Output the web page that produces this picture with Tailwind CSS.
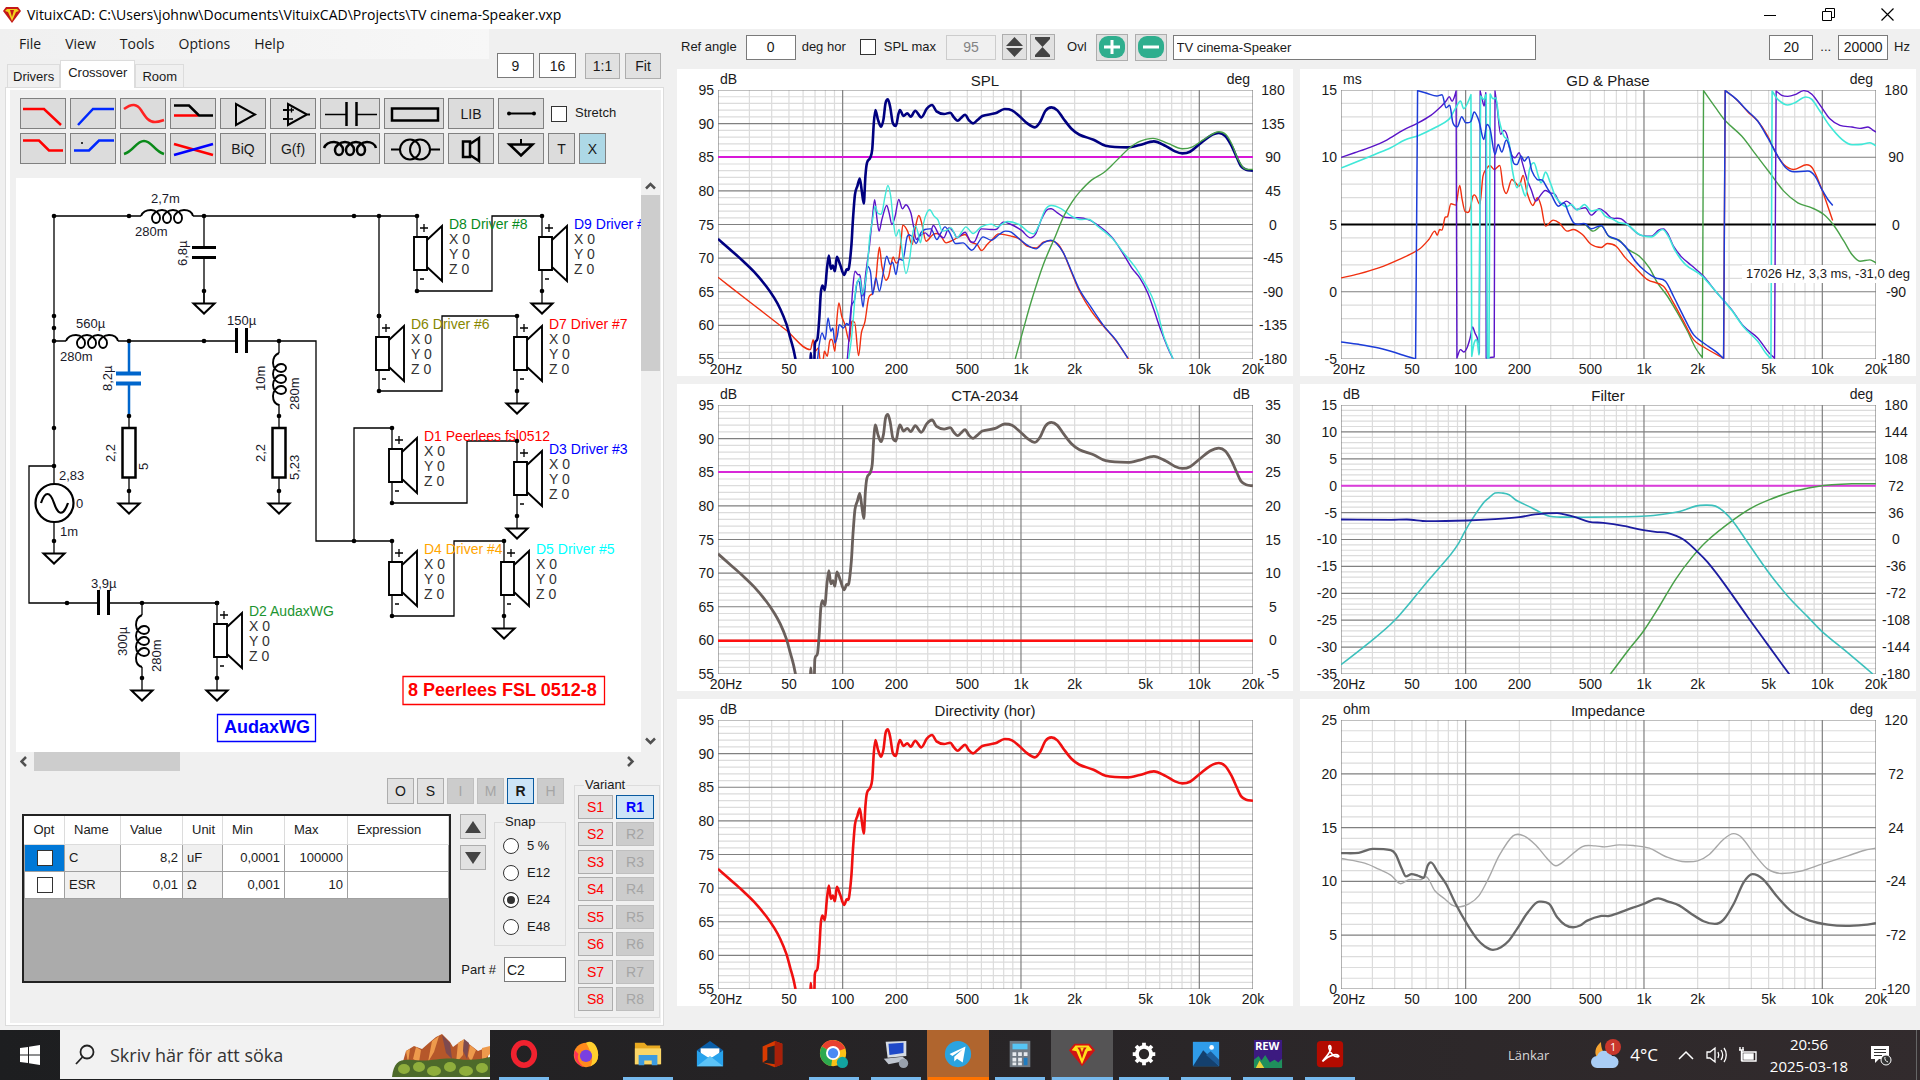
<!DOCTYPE html>
<html lang="sv">
<head>
  <meta charset="UTF-8">
  <meta name="viewport" content="width=device-width, initial-scale=1">
  <title>VituixCAD</title>
  <script src="https://cdn.jsdelivr.net/npm/@tailwindcss/browser@4"></script>
</head>
<body class="h-screen min-h-[1080px] flex flex-col bg-[#f0f0f0] text-[#1a1a1a] text-[13px] leading-4 font-['Liberation_Sans',Arial,sans-serif] overflow-hidden">

  <!-- Title bar -->
  <header class="h-[29px] shrink-0 bg-white flex items-center text-black font-['Open_Sans',sans-serif] text-sm">
    <svg class="ml-[3px] mr-[6px]" width="18" height="16" viewBox="0 0 18 16"><path d="M3 0h12l3 4-9 12L0 4z" fill="#c41818"/><path d="M4 2h10l2 2-3 1-4 9-4-9-3-1z" fill="#f2d21c"/><path d="M7 3h4l-2 7z" fill="#c41818"/></svg>
    <span>VituixCAD: C:\Users\johnw\Documents\VituixCAD\Projects\TV cinema-Speaker.vxp</span>
    <div class="ml-auto mr-[3px] flex">
      <button class="w-[58px] h-[29px] grid place-items-center" aria-label="Minimize"><svg width="12" height="12"><path d="M0 6.5h12" stroke="#000"/></svg></button>
      <button class="w-[58px] h-[29px] grid place-items-center" aria-label="Restore"><svg width="13" height="13" fill="none" stroke="#000"><path d="M.5 3.500h9v9h-9zM3.500 3V.5h9v9H10"/></svg></button>
      <button class="w-[60px] h-[29px] grid place-items-center" aria-label="Close"><svg width="13" height="13" stroke="#000" stroke-width="1.200"><path d="M.5.5l12 12M12.500.5l-12 12"/></svg></button>
    </div>
  </header>

  <main class="flex-1 flex min-h-0">

    <!-- Left side: crossover editor -->
    <section class="w-[669px] shrink-0 flex flex-col">
      <div class="flex justify-between h-[58px]">
        <div class="flex flex-col justify-between">
          <nav class="w-[489px] h-[30px] flex items-center gap-6 pl-[19px] bg-linear-to-r from-[#f0f0f0] to-[#f7f7f7] font-['Open_Sans',sans-serif] text-sm">
            <button>File</button><button>View</button><button>Tools</button><button>Options</button><button>Help</button>
          </nav>
          <div class="flex items-end pl-[7px] relative z-10 -mb-px" role="tablist">
            <button role="tab" class="h-6 px-[5px] border border-b-0 border-[#dcdcdc]">Drivers</button>
            <button role="tab" class="h-7 px-[7px] pb-1 bg-white border border-b-0 border-[#dcdcdc]">Crossover</button>
            <button role="tab" class="h-6 px-[6px] border border-b-0 border-[#dcdcdc]">Room</button>
          </div>
        </div>
        <div class="flex gap-[5px] pt-6 pr-2 text-sm">
          <input aria-label="Columns" value="9" class="w-[37px] h-[25px] bg-white border border-[#7a7a7a] text-center">
          <input aria-label="Rows" value="16" class="w-[37px] h-[25px] bg-white border border-[#7a7a7a] text-center">
          <button class="ml-[4px] w-[35px] h-[26px] bg-[#e1e1e1] border border-[#adadad]">1:1</button>
          <button class="w-[36px] h-[26px] bg-[#e1e1e1] border border-[#adadad]">Fit</button>
        </div>
      </div>

      <div class="ml-[5px] mr-[5px] mb-1 flex-1 border border-[#dcdcdc]">
        <div class="h-full border-2 border-l-4 border-white pt-2">

          <!-- Parts toolbar -->
          <div class="pl-[10px] flex flex-col gap-1" id="toolbar"></div>

          <!-- Schematic -->
          <div class="mt-[14px] pl-[6px] flex">
            <div>
              <svg id="schematic" class="bg-white" width="625" height="574" viewBox="16 178 625 574" fill="none" stroke="#000" stroke-width="1.300">
                <defs>
                  <path id="coil" d="M0 0C2 -5 6 -6 10 -6c5 0 9 4 9 8c0 3 -2 5 -4 5c-2 0 -4 -2 -4 -5c0 -4 5 -8 10 -8c5 0 9 4 9 8c0 3 -2 5 -4 5c-2 0 -4 -2 -4 -5c0 -4 5 -8 10 -8c5 0 9 4 9 8c0 3 -2 5 -4 5c-2 0 -4 -2 -4 -5c0 -4 5 -8 10 -8c4 0 8 2 9 6"/>
                  <g id="ground"><circle r="2.300" fill="#000" stroke="none"/><path d="M0 0V12"/><path d="M-10.500 12.500H10.500L0 22.500z" stroke-width="2"/></g>
                  <circle id="dot" r="2.300" fill="#000" stroke="none"/>
                  <g id="speaker"><path d="M0 0V20M0 54V75"/><path d="M-3 21H10V54H-3zM10 24L25 10V65L10 51" stroke-width="1.900"/><path d="M3 12h8M7 8v8M3 63h4" stroke-width="1.300"/></g>
                </defs>
                <g id="wires">
                  <path d="M54 216V484M54 216H141M193 216H417M204 216V247M204 258V303M54 341H66M118 341H236M247 341H316V541H392M279 341V353M279 404V427M279 478V491M129 416V427M129 478V491"/>
                  <path d="M54 466H29V603H97M109 603H217M142 603V615M142 667V678M54 522V541"/>
                  <path d="M417 291H492V216H542M379 216V316M379 391H442V316H517M354 541V428H392M392 503H467V441H517M392 616H454V541H504"/>
                </g>
                <g stroke-width="3"><path d="M192 247.500H216M192 257.500H216M236.500 328V353M246.500 328V353M98.500 590V615M108.500 590V615"/></g>
                <g stroke-width="2.500"><path d="M122.500 428H135.500V477.500H122.500zM272.500 428H285.500V477.500H272.500z"/></g>
                <g stroke="#0066cc"><path d="M129 341V373M129 383V416" stroke-width="2.500"/><path d="M116 373.500H141M116 383.500H141" stroke-width="4"/></g>
                <g stroke-width="1.900">
                  <use href="#coil" x="141" y="216"/><use href="#coil" x="66" y="341"/>
                  <use href="#coil" transform="matrix(0 1 1 0 279 353)"/><use href="#coil" transform="matrix(0 1 1 0 142 615)"/>
                </g>
                <circle cx="54.500" cy="503" r="19" stroke-width="2.200"/>
                <path d="M41 503C45 491 50 491 54 503S63 517 68 503" stroke-width="2.200"/>
                <g id="dots"></g>
                <g fill="#1a1a2a" stroke="none" font-size="13">
                  <text x="151" y="203">2,7m</text><text x="135" y="236">280m</text>
                  <text x="76" y="328">560µ</text><text x="60" y="361">280m</text>
                  <text x="227" y="325">150µ</text><text x="91" y="588">3,9µ</text>
                  <text x="59" y="480">2,83</text><text x="76" y="508">0</text><text x="60" y="536">1m</text>
                  <text transform="translate(187 266) rotate(-90)">6,8µ</text>
                  <text transform="translate(112 391) rotate(-90)">8,2µ</text>
                  <text transform="translate(115 462) rotate(-90)">2,2</text>
                  <text transform="translate(148 470) rotate(-90)">5</text>
                  <text transform="translate(265 391) rotate(-90)">10m</text>
                  <text transform="translate(299 410) rotate(-90)">280m</text>
                  <text transform="translate(265 462) rotate(-90)">2,2</text>
                  <text transform="translate(299 480) rotate(-90)">5,23</text>
                  <text transform="translate(127 656) rotate(-90)">300µ</text>
                  <text transform="translate(161 672) rotate(-90)">280m</text>
                </g>
                <g id="drivers"></g>
                <g font-size="18" font-weight="bold">
                  <path d="M217.500 714.500H315.500V741.500H217.500z" stroke="#00f"/><text x="224" y="733" fill="#00f" stroke="none">AudaxWG</text>
                  <path d="M403 676.500H604.500V704.500H403z" stroke="#f00"/><text x="408" y="696" fill="#f00" stroke="none">8 Peerlees FSL 0512-8</text>
                </g>
              </svg>
              <div class="h-[19px] flex items-center justify-between px-1">
                <svg width="9" height="11" fill="none" stroke="#505050" stroke-width="2.500"><path d="M6 1L1.500 5.500 6 10"/></svg>
                <div class="ml-[5px] mr-auto w-[146px] h-[19px] bg-[#cdcdcd]"></div>
                <svg width="11" height="11" fill="none" stroke="#505050" stroke-width="2.500"><path d="M2 1l4.500 4.500L2 10"/></svg>
              </div>
            </div>
            <div class="w-[19px] h-[574px] flex flex-col items-center justify-between py-1">
              <svg width="11" height="9" fill="none" stroke="#505050" stroke-width="2.500"><path d="M1 6.500L5.500 2 10 6.500"/></svg>
              <div class="mt-1 mb-auto w-[19px] h-[176px] bg-[#cdcdcd]"></div>
              <svg width="11" height="11" fill="none" stroke="#505050" stroke-width="2.500"><path d="M1 1.500L5.500 6 10 1.500"/></svg>
            </div>
          </div>

          <!-- Part values -->
          <div class="mt-[6px] pl-3 flex gap-2">
            <div class="w-[544px] flex flex-col gap-[10px] pt-px">
              <div class="flex justify-end gap-[3px] pr-[2px] text-sm">
                <button class="w-[27px] h-[26px] bg-[#e1e1e1] border border-[#adadad]">O</button>
                <button class="w-[27px] h-[26px] bg-[#e1e1e1] border border-[#adadad]">S</button>
                <button class="w-[27px] h-[26px] bg-[#cccccc] border border-[#bfbfbf] text-[#a5a5a5]" disabled>I</button>
                <button class="w-[27px] h-[26px] bg-[#cccccc] border border-[#bfbfbf] text-[#a5a5a5]" disabled>M</button>
                <button class="w-[27px] h-[26px] bg-[#cce4f7] border border-[#0a5a9f] font-bold">R</button>
                <button class="w-[27px] h-[26px] bg-[#cccccc] border border-[#bfbfbf] text-[#a5a5a5]" disabled>H</button>
              </div>
              <div class="flex">
                <div class="w-[429px] h-[169px] border-2 border-[#222] bg-[#ababab]">
                  <table class="w-full table-fixed border-collapse bg-white">
                    <colgroup><col class="w-[40px]"><col class="w-[56px]"><col class="w-[62px]"><col class="w-[40px]"><col class="w-[62px]"><col class="w-[63px]"><col></colgroup>
                    <thead>
                      <tr class="h-[28px] *:font-normal *:border-b *:border-r *:border-[#dcdcdc] *:text-left">
                        <th class="pl-[9px]">Opt</th><th class="pl-[9px]">Name</th><th class="pl-[9px]">Value</th><th class="pl-[9px]">Unit</th><th class="pl-[9px]">Min</th><th class="pl-[9px]">Max</th><th class="pl-[9px]">Expression</th>
                      </tr>
                    </thead>
                    <tbody class="*:h-[27px]">
                      <tr class="*:border *:border-[#a0a0a0]">
                        <td class="bg-[#0078d7]"><input type="checkbox" aria-label="Optimize C" class="block mx-auto appearance-none w-4 h-4 bg-white border border-[#333]"></td>
                        <td class="bg-[#f0f0f0] pl-1">C</td><td class="text-right pr-1">8,2</td><td class="bg-[#f0f0f0] pl-1">uF</td><td class="text-right pr-1">0,0001</td><td class="text-right pr-1">100000</td><td></td>
                      </tr>
                      <tr class="*:border *:border-[#a0a0a0]">
                        <td><input type="checkbox" aria-label="Optimize ESR" class="block mx-auto appearance-none w-4 h-4 bg-white border border-[#333]"></td>
                        <td class="bg-[#f0f0f0] pl-1">ESR</td><td class="text-right pr-1">0,01</td><td class="bg-[#f0f0f0] pl-1">Ω</td><td class="text-right pr-1">0,001</td><td class="text-right pr-1">10</td><td></td>
                      </tr>
                    </tbody>
                  </table>
                </div>
                <div class="ml-[9px] flex flex-col gap-[6px]">
                  <button aria-label="Up" class="w-[26px] h-[25px] grid place-items-center bg-[#e1e1e1] border border-[#adadad]"><svg width="18" height="14"><path d="M1 13L9 1l8 12z" fill="#444"/></svg></button>
                  <button aria-label="Down" class="w-[26px] h-[25px] grid place-items-center bg-[#e1e1e1] border border-[#adadad]"><svg width="18" height="14"><path d="M1 1l8 12 8-12z" fill="#444"/></svg></button>
                </div>
                <fieldset class="ml-2 w-[72px] h-[132px] border border-[#dcdcdc]">
                  <legend class="ml-[9px] px-px">Snap</legend>
                  <div class="flex flex-col gap-[11px] pl-2 pt-2">
                    <label class="flex items-center gap-2"><input type="radio" name="snap" class="appearance-none w-4 h-4 rounded-full border border-[#333] bg-white"><span>5 %</span></label>
                    <label class="flex items-center gap-2"><input type="radio" name="snap" class="appearance-none w-4 h-4 rounded-full border border-[#333] bg-white"><span>E12</span></label>
                    <label class="flex items-center gap-2"><input type="radio" name="snap" checked class="appearance-none w-4 h-4 rounded-full border border-[#333] bg-[#333] shadow-[inset_0_0_0_3px_white]"><span>E24</span></label>
                    <label class="flex items-center gap-2"><input type="radio" name="snap" class="appearance-none w-4 h-4 rounded-full border border-[#333] bg-white"><span>E48</span></label>
                  </div>
                </fieldset>
              </div>
              <div class="-mt-9 flex items-center justify-end gap-2">
                <label for="part">Part #</label>
                <input id="part" value="C2" class="w-[62px] h-[25px] px-[2px] bg-white border border-[#7a7a7a] text-sm">
              </div>
            </div>
            <fieldset class="w-[86px] h-[241px] border border-[#dcdcdc]">
              <legend class="ml-[9px] px-px">Variant</legend>
              <div id="variants" class="flex flex-col justify-between h-[218px] pl-[3px] pt-[2px] text-sm"></div>
            </fieldset>
          </div>
        </div>
      </div>
    </section>

    <!-- Right side: graphs -->
    <section class="flex-1 min-w-0 flex flex-col pl-2 pr-1">
      <div class="h-10 flex items-center pl-1 pb-1">
        <label for="ref">Ref angle</label>
        <input id="ref" value="0" class="ml-[9px] w-[50px] h-[25px] bg-white border border-[#7a7a7a] text-center text-sm">
        <span class="ml-[6px]">deg hor</span>
        <label class="ml-[14px] flex items-center gap-2"><input type="checkbox" class="appearance-none w-4 h-4 bg-white border border-[#333]"><span>SPL max</span></label>
        <input aria-label="SPL max value" value="95" disabled class="ml-[10px] w-[50px] h-[25px] border border-[#cccccc] text-center text-sm text-[#838383]">
        <button aria-label="Expand" class="ml-[6px] w-[25px] h-[26px] grid place-items-center bg-[#e1e1e1] border border-[#adadad]"><svg width="17" height="20" fill="#444"><path d="M0 9L8.500 0 17 9zM0 11l8.500 9 8.500-9z"/></svg></button>
        <button aria-label="Compress" class="ml-[3px] w-[25px] h-[26px] grid place-items-center bg-[#e1e1e1] border border-[#adadad]"><svg width="17" height="20" fill="#444"><path d="M1 0h15v2L8.500 10 1 2zM1 20h15v-2L8.500 10 1 18z"/></svg></button>
        <span class="ml-3">Ovl</span>
        <button aria-label="Add overlay" class="ml-[9px] w-8 h-[27px] grid place-items-center bg-[#e1e1e1] border border-[#adadad]"><svg width="26" height="22"><rect width="26" height="22" rx="9" fill="#2fae8e"/><path d="M5 11h16M13 4v14" stroke="#fff" stroke-width="3"/></svg></button>
        <button aria-label="Remove overlay" class="ml-[7px] w-8 h-[27px] grid place-items-center bg-[#e1e1e1] border border-[#adadad]"><svg width="26" height="22"><rect width="26" height="22" rx="9" fill="#2fae8e"/><path d="M5 11h16" stroke="#fff" stroke-width="3"/></svg></button>
        <input aria-label="Project name" value="TV cinema-Speaker" class="ml-[6px] w-[363px] h-[25px] px-[3px] bg-white border border-[#7a7a7a]">
        <input aria-label="From" value="20" class="ml-auto w-11 h-[25px] bg-white border border-[#7a7a7a] text-center text-sm">
        <span class="mx-[7px]">...</span>
        <input aria-label="To" value="20000" class="w-[50px] h-[25px] bg-white border border-[#7a7a7a] text-center text-sm">
        <span class="mx-[6px]">Hz</span>
      </div>
      <div id="charts" class="grid grid-cols-2 gap-x-[7px] gap-y-2"></div>
    </section>
  </main>

  <!-- Taskbar -->
  <footer class="h-[50px] shrink-0 flex bg-linear-to-r from-[#1d1e20] to-[#322b2d] text-white font-['Open_Sans',sans-serif]">
    <button aria-label="Start" class="w-[60px] grid place-items-center"><svg width="20" height="20" fill="#fff"><path d="M0 3l8-1v7.500H0zM9 1.800L20 0v9.500H9zM0 10.500h8V18l-8-1zM9 10.500h11V20L9 18.200z"/></svg></button>
    <label class="w-[430px] h-[49px] bg-[#f2f2f2] flex items-center text-[#333]">
      <svg class="ml-[13px]" width="24" height="24" fill="none" stroke="#222" stroke-width="1.800"><circle cx="14" cy="9" r="6.500"/><path d="M9.500 14L3 21"/></svg>
      <input value="Skriv här för att söka" class="ml-[13px] w-[260px] text-[18px] bg-transparent">
      <svg class="ml-auto" width="98" height="44" viewBox="0 0 98 44">
        <path d="M10 32L14 18l8-5 8 3 8-7 6-5 6-3 8 8 3 5 8-6 8 3 9 7 7-3 3 2v20z" fill="#b5572a"/>
        <path d="M14 18l4-2-2 14zM24 14l5 3-2 12-6-3zM40 8l7-5-5 16-6 10zM66 10l6-4-1 16-7 8zM78 12l6 5-5 12-3-6zM90 15l8-2v8l-8 8z" fill="#ee9a4c"/>
        <path d="M50 2l8 8 2 16-6-6zM72 6l5 4-2 16-4-8z" fill="#7d4a4f"/>
        <path d="M0 44c2-16 8-18 20-17 20 2 30-3 45-1s24 0 33-2v20z" fill="#4d6a2a"/>
        <g fill="#8fae3c"><ellipse cx="12" cy="36" rx="6" ry="5"/><ellipse cx="27" cy="34" rx="6" ry="5"/><ellipse cx="42" cy="38" rx="7" ry="5"/><ellipse cx="58" cy="34" rx="6" ry="5"/><ellipse cx="74" cy="38" rx="7" ry="5"/><ellipse cx="90" cy="35" rx="6" ry="5"/></g>
      </svg>
    </label>
    <nav id="tasks" class="flex ml-[3px]"></nav>
    <div class="ml-auto flex items-center text-sm">
      <span class="mr-[40px] text-[13px] text-[#d8d8d8]">Länkar</span>
      <svg width="34" height="34" viewBox="0 0 34 34"><path d="M12 4c-6 5-8 12-2 18l10-2c-6-4-8-10-8-16z" fill="#f7a531"/><path d="M8 30a6 6 0 010-12 8 8 0 0115 0 6 6 0 011 12z" fill="#a9cdf5"/><circle cx="24" cy="9" r="8" fill="#c9372c"/><text x="21" y="13" font-size="11" fill="#fff">1</text></svg>
      <span class="ml-[7px] text-[17px]">4°C</span>
      <svg class="ml-[20px]" width="16" height="10" fill="none" stroke="#fff" stroke-width="1.500"><path d="M1 9l7-7 7 7"/></svg>
      <svg class="ml-3" width="22" height="18" fill="none" stroke="#fff" stroke-width="1.300"><path d="M1 6h3l5-4v14l-5-4H1zM12 6c1 2 1 4 0 6M15 4c2 3 2 7 0 10M18 2c3 4 3 10 0 14"/></svg>
      <svg class="ml-[10px]" width="20" height="18" fill="none" stroke="#fff" stroke-width="1.400"><path d="M4 6h14v9H4z"/><path d="M6 8h9v5H6z" fill="#fff"/><path d="M1 4h5M2 1v3M5 1v3M3.500 4v11"/></svg>
      <div class="ml-[11px] w-[80px] text-center text-[15px] leading-[22px] whitespace-nowrap">20:56<br>2025-03-18</div>
      <svg class="ml-[21px] mr-[24px]" width="22" height="22" viewBox="0 0 22 22"><path d="M1 2h18v13H9l-4 4v-4H1z" fill="#fff"/><path d="M4 5.500h12M4 8.500h12M4 11.500h8" stroke="#333"/><circle cx="16" cy="16" r="5" fill="#333" stroke="#fff"/><path d="M15 13a4 4 0 003 5" stroke="#fff" fill="none"/></svg>
      <div class="w-px h-[50px] bg-[#666] mr-[3px]"></div>
    </div>
  </footer>

  <script>
    // Toolbar buttons: width, icon or caption
    const wide = 'w-[60px]', normal = 'w-[46px]', small = 'w-[27px]';
    const icon = (w, body) => `<svg width="${w - 2}" height="29" viewBox="1 1 ${w - 2} 29" fill="none" stroke="#000" stroke-width="2">${body}</svg>`;
    const rows = [
      [
        ['Low pass', normal, icon(46, '<path d="M3 11H24L41 27" stroke="red" stroke-width="2.500"/>')],
        ['High pass', normal, icon(46, '<path d="M8 27L23 11H44" stroke="#0028ff" stroke-width="2.500"/>')],
        ['All pass', normal, icon(46, '<path d="M4 11C12 5 17 6 21 12C26 20 29 24 35 24C39 24 41 23 44 22" stroke="#f22" stroke-width="2.500"/>')],
        ['Shelf', normal, icon(46, '<path d="M4 17.500H28" stroke="red" stroke-width="2.500"/><path d="M4 7.500H19L29 17.500H43" stroke-width="2.500"/>')],
        ['Buffer', normal, icon(46, '<path d="M16 6V27L35 16.500z"/>')],
        ['Op amp', normal, icon(46, '<path d="M18 6V27L37 16.500zM37 16.500h3M13 12h5M13 21h5"/><path d="M19 12h5M21.500 9.500v5M19 21h4" stroke-width="1.300"/>')],
        ['Capacitor', wide, icon(60, '<path d="M5 16.500H26M37 16.500H57" stroke-width="1.500"/><path d="M26.500 4V28M36.500 4V28" stroke-width="2.500"/>')],
        ['Resistor', wide, icon(60, '<path d="M8 10.500H54V22.500H8z" stroke-width="2.500"/>')],
        ['Library', normal, 'LIB'],
        ['Wire', normal, icon(46, '<path d="M10 15.500H36"/><circle cx="11" cy="15.500" r="2" fill="#000" stroke="none"/><circle cx="36" cy="15.500" r="2" fill="#000" stroke="none"/>')],
      ],
      [
        ['Low shelf', normal, icon(46, '<path d="M3 7.500H19L29 17.500H43" stroke="red" stroke-width="2.500"/>')],
        ['High shelf', normal, icon(46, '<path d="M4 17.500H19L29 7.500H44" stroke="#0028ff" stroke-width="2.500"/><path d="M11 10h2" stroke-width="1.500"/>')],
        ['Peak', normal, icon(46, '<path d="M4 21C14 18 16 8 24 8C32 8 34 18 44 21" stroke="#0a8a1a" stroke-width="2.500"/>')],
        ['Crossover', normal, icon(46, '<path d="M4 11L43 22" stroke="red" stroke-width="2.500"/><path d="M4 22L43 11" stroke="#00f" stroke-width="2.500"/>')],
        ['Biquad', normal, 'BiQ'],
        ['G(f)', normal, 'G(f)'],
        ['Inductor', wide, icon(60, '<use href="#coil" x="4" y="15" stroke-width="2.500"/>')],
        ['Transformer', wide, icon(60, '<path d="M7 16.500H16M46 16.500H56"/><circle cx="26" cy="16.500" r="10"/><circle cx="36" cy="16.500" r="10"/>')],
        ['Driver', normal, icon(46, '<path d="M15 8.500H22V24H15zM22 11L31 5V28L22 22" stroke-width="2.500"/>')],
        ['Ground', normal, icon(46, '<path d="M23 6V11"/><path d="M11.500 11.500H34.500L23 22.500z" stroke-width="2.500"/>')],
        ['Text', small, 'T'],
        ['Delete', small, 'X'],
      ],
    ];
    document.getElementById('toolbar').innerHTML = rows.map((row, i) => `
      <div class="flex gap-1 text-sm">
        ${row.map(([name, w, body]) => `<button aria-label="${name}" class="${w} h-[31px] grid place-items-center border border-[#808080] ${name === 'Delete' ? 'bg-[#add8e6]' : 'bg-[#dcdcdc]'}">${body}</button>`).join('')}
        ${i === 0 ? '<label class="ml-[3px] flex items-center gap-2 text-[13px]"><input type="checkbox" class="appearance-none w-4 h-4 bg-white border border-[#333]"><span>Stretch</span></label>' : ''}
      </div>`).join('');

    // Variants
    document.getElementById('variants').innerHTML = [1, 2, 3, 4, 5, 6, 7, 8].map(n => `
      <div class="flex gap-[3px]">
        <button class="w-[35px] h-6 bg-[#e1e1e1] border border-[#adadad] text-[#f00]">S${n}</button>
        ${n === 1
          ? '<button class="w-[38px] h-6 bg-[#cce4f7] border border-[#0a5a9f] text-[#00f] font-bold">R1</button>'
          : `<button disabled class="w-[38px] h-6 bg-[#cccccc] border border-[#bfbfbf] text-[#a5a5a5]">R${n}</button>`}
      </div>`).join('');

    // Schematic nodes
    const dots = [[54,216],[129,216],[204,216],[354,216],[379,216],[54,316],[54,328],[54,341],[129,341],[204,341],[279,341],[54,428],[54,466],[129,416],[279,416],[67,603],[142,603],[217,603],[354,541],[379,316]];
    const grounds = [[204,291],[129,491],[279,491],[54,541],[142,678]];
    document.getElementById('dots').innerHTML =
      dots.map(([x, y]) => `<use href="#dot" x="${x}" y="${y}"/>`).join('') +
      grounds.map(([x, y]) => `<use href="#ground" x="${x}" y="${y}"/>`).join('');

    // Drivers: x, y, label, color, grounded
    const drivers = [
      [417, 216, 'D8 Driver #8', '#078a1d', false], [542, 216, 'D9 Driver #9', '#0000ff', true],
      [379, 316, 'D6 Driver #6', '#868600', false], [517, 316, 'D7 Driver #7', '#ff0000', true],
      [392, 428, 'D1 Peerlees fsl0512', '#ff0000', false], [517, 441, 'D3 Driver #3', '#0000ff', true],
      [392, 541, 'D4 Driver #4', '#ffa500', false], [504, 541, 'D5 Driver #5', '#00ffff', true],
      [217, 603, 'D2 AudaxWG', '#1c9430', true],
    ];
    document.getElementById('drivers').innerHTML = drivers.map(([x, y, label, color, gnd]) => `
      <g transform="translate(${x} ${y})">
        <use href="#speaker"/><use href="#dot"/>
        <use href="${gnd ? '#ground' : '#dot'}" y="75"/>
        <g font-size="14" stroke="none" fill="#333">
          <text x="32" y="13" fill="${color}">${label}</text>
          <text x="32" y="28">X 0</text><text x="32" y="43">Y 0</text><text x="32" y="58">Z 0</text>
        </g>
      </g>`).join('');

    // Smooth path through the points; "|" marks a phase wrap (straight jump)
    function slope(a, b, c) {
      if (c[0] === a[0] || (b[1] - a[1]) * (c[1] - b[1]) < 0) return 0;
      return (c[1] - a[1]) / (c[0] - a[0]);
    }

    function curve(str) {
      return str.split('|').map((part, k) => {
        const p = part.trim().split(/\s+/).map(s => s.split(',').map(Number));
        let d = `${k ? 'L' : 'M'}${p[0]}`;
        for (let i = 0; i < p.length - 1; i++) {
          const a = p[i - 1] || p[i], b = p[i], c = p[i + 1], e = p[i + 2] || c;
          const dx = (c[0] - b[0]) / 3;
          d += `C${b[0] + dx},${b[1] + slope(a, b, c) * dx} ${c[0] - dx},${c[1] - slope(b, c, e) * dx} ${c}`;
        }
        return d;
      }).join('');
    }

    const total = '120,658 150,690 180,722 210,757 240,800 260,835 275,868 290,912 300,955 308,990 314,1025 | 350,1030 351,1000 353,1030 | 360,1025 361,975 368,955 372,900 376,820 380,798 386,812 391,750 396,708 401,748 406,738 411,755 416,712 424,735 434,766 440,750 446,745 452,680 456,600 461,525 467,500 473,477 478,515 483,552 487,470 491,430 499,415 504,390 508,310 512,272 518,300 526,322 532,300 537,252 543,240 549,265 555,310 563,320 569,285 573,272 582,290 591,282 600,292 611,274 626,294 640,268 653,257 664,276 683,284 698,280 708,295 717,304 725,296 735,286 745,303 755,312 766,302 778,290 810,282 834,269 852,273 872,292 890,312 909,324 922,308 935,275 950,264 965,273 980,298 1000,328 1020,346 1055,361 1085,379 1140,384 1170,377 1205,366 1235,380 1258,396 1276,402 1295,397 1320,373 1345,350 1367,341 1383,350 1398,378 1412,415 1422,440 1435,451 1452,454';

    const charts = [
      {
        title: 'SPL', unit: ['dB', 'deg'], box: [120, 212, 1332, 806],
        left: [95, 90, 85, 80, 75, 70, 65, 60, 55], right: [180, 135, 90, 45, 0, -45, -90, -135, -180],
        lines: [['#d818d8', 2, 413]],
        curves: [
          ['#f03010', 1.400, '120,773 200,848 290,932 350,990 357,960 362,995 370,985 374,1018 382,1018 385,995 392,1010 398,965 404,960 411,995 416,900 421,850 428,890 436,915 447,965 452,910 460,908 470,1008 477,940 486,905 495,835 505,820 513,780 518,715 522,683 528,740 538,782 545,770 550,740 556,712 563,730 570,720 576,660 580,617 592,635 603,675 612,620 620,588 627,610 638,665 655,645 672,645 688,670 705,662 722,650 735,645 750,668 765,675 776,693 790,675 803,660 818,643 850,650 870,658 890,680 912,685 930,668 948,664 965,672 980,700 1000,758 1020,815 1050,875 1080,920 1110,962 1142,1018'],
          ['#1c3cd8', 1.400, '368,1018 372,975 379,940 387,960 394,895 401,935 406,925 411,970 417,950 422,915 432,925 440,912 447,912 452,860 460,840 466,790 471,785 476,820 481,862 488,780 492,740 500,760 505,825 513,775 522,815 530,770 540,710 549,735 555,728 563,765 571,718 580,722 591,652 603,650 613,672 625,640 635,630 650,628 665,660 675,640 685,622 697,640 711,672 730,670 752,692 765,675 780,652 800,662 820,645 835,635 850,638 872,660 890,677 912,688 930,670 948,662 960,668 980,700 1000,755 1020,810 1050,865 1080,918 1110,960 1140,1015'],
          ['#5a14c8', 1.400, '442,1018 450,900 456,800 461,755 468,765 474,770 481,830 488,760 497,680 504,600 510,541 516,600 521,635 528,600 540,558 546,580 553,615 561,590 570,540 579,568 588,556 600,580 606,615 614,660 622,650 636,640 646,650 656,618 670,645 682,655 695,625 708,640 715,655 735,638 748,665 757,668 775,628 800,630 815,628 830,608 850,615 875,632 898,655 910,645 925,600 938,572 950,568 965,580 980,592 1000,595 1030,596 1060,612 1100,652 1130,705 1150,745 1170,775 1190,820 1205,870 1222,930 1240,985 1253,1018'],
          ['#40e8d8', 1.400, '445,1018 452,960 458,880 463,805 468,785 473,775 479,825 485,800 492,740 498,650 505,600 511,560 519,582 528,580 536,530 543,498 550,530 556,600 563,650 571,630 577,680 588,762 597,720 605,640 612,620 620,650 624,670 632,610 640,580 647,571 658,590 668,602 678,635 690,632 700,625 715,655 728,635 737,622 755,642 775,622 800,614 815,622 840,606 870,615 890,635 905,643 918,620 935,570 950,558 975,568 1000,590 1020,600 1045,600 1065,620 1100,655 1130,700 1160,745 1180,785 1200,830 1215,880 1230,950 1253,1018'],
          ['#000080', 2.600, total],
          ['#48a048', 1.400, '860,1018 880,930 900,845 930,735 960,650 980,592 1000,550 1020,518 1050,482 1080,460 1100,438 1125,408 1145,385 1170,366 1203,357 1240,372 1276,388 1300,383 1330,360 1367,337 1385,346 1400,376 1415,420 1430,447 1452,450'],
        ],
      },
      {
        title: 'GD & Phase', unit: ['ms', 'deg'], box: [126, 212, 1334, 806],
        left: [15, 10, 5, 0, -5], right: [180, 90, 0, -90, -180],
        lines: [['#000', 2, 615]],
        tip: '17026 Hz, 3,3 ms, -31,0 deg',
        curves: [
          ['#48a048', 1.400, '735,615 755,635 775,620 795,652 820,662 840,688 870,710 895,745 915,790 940,830 965,880 990,935 1010,985 1027,1014 | 1030,214 1060,265 1085,305 1125,350 1160,405 1195,460 1230,515 1265,550 1300,565 1330,585 1355,618 1380,665 1400,705 1420,725 1445,721 1460,730'],
          ['#f03010', 1.400, '126,775 170,763 220,745 270,720 320,690 345,660 360,635 366,647 372,630 378,632 385,595 392,590 400,553 412,557 422,498 428,540 436,577 446,575 455,530 462,530 472,555 480,470 488,450 497,438 508,450 522,438 530,500 538,522 552,480 570,500 580,468 590,520 604,558 616,535 625,560 636,620 655,602 670,610 690,635 705,630 728,645 750,675 775,684 790,672 812,680 835,715 860,745 890,780 930,800 955,850 980,905 1005,960 1030,982 1080,1016 | 1084,214 1110,238 1140,277 1165,305 1190,350 1210,400 1230,435 1255,450 1287,436 1302,447 1325,510 1352,603'],
          ['#5a14c8', 1.400, '126,414 160,400 200,383 240,362 280,333 316,312 350,288 375,262 388,245 396,232 403,246 408,235 413,215 | 415,1015 424,990 432,997 440,985 448,955 454,922 460,940 467,960 471,1000 | 473,215 478,240 483,260 487,220 | 488,1015 508,1012 | 510,215 516,270 524,345 532,333 540,348 549,400 560,415 570,400 577,425 590,480 600,510 612,545 622,530 635,513 648,520 660,525 675,555 688,545 700,555 712,570 735,565 750,587 770,568 785,578 800,595 825,598 845,620 870,645 900,650 918,632 930,628 942,645 955,680 975,712 1000,738 1030,770 1060,815 1100,870 1130,920 1165,955 1190,995 1207,1016 | 1211,215 1225,228 1240,231 1258,226 1280,214 1300,225 1325,265 1345,298 1370,318 1400,323 1420,327 1440,323 1452,332 1460,338'],
          ['#40e8d8', 1.600, '126,446 170,425 210,405 250,385 285,362 320,348 360,325 395,300 410,270 424,245 432,268 442,250 450,226 | 452,1010 458,970 464,960 470,1005 | 474,230 482,240 488,225 | 491,1015 495,1015 | 498,224 505,238 512,235 520,300 532,350 545,370 553,450 565,505 572,490 586,530 596,450 607,430 618,470 625,490 636,458 648,490 660,530 672,548 688,562 700,555 715,572 733,555 750,575 770,570 785,590 805,600 820,610 840,615 870,645 900,652 928,630 942,650 960,695 985,735 1025,768 1060,815 1100,872 1130,922 1165,965 1185,1000 1198,1018 | 1201,215 1215,240 1240,257 1258,250 1285,233 1300,240 1320,275 1345,320 1375,360 1400,376 1425,375 1445,370 1460,380'],
          ['#1c3cd8', 1.500, '126,967 170,974 220,985 270,1002 312,1018 | 317,214 340,222 365,230 378,226 388,265 397,258 405,310 416,322 427,292 437,310 450,306 458,278 470,305 482,360 490,315 498,330 510,405 518,375 527,398 538,362 548,390 556,430 565,435 575,410 583,425 593,412 602,455 615,480 628,482 640,505 650,525 668,560 682,550 695,585 708,612 735,613 750,628 775,618 792,648 815,660 835,680 860,725 885,755 910,775 935,785 955,830 980,890 1005,945 1030,970 1060,995 1080,1016 | 1084,214 1110,238 1140,275 1165,305 1190,355 1215,410 1235,445 1255,457 1290,455 1308,470 1325,510 1340,540 1352,558'],
        ],
      },
      {
        title: 'CTA-2034', unit: ['dB', 'dB'], box: [120, 212, 1332, 806],
        left: [95, 90, 85, 80, 75, 70, 65, 60, 55], right: [35, 30, 25, 20, 15, 10, 5, 0, -5],
        lines: [['#d828d8', 2, 413], ['#ff1010', 2.500, 918]],
        curves: [['#6a605c', 2.800, total]],
      },
      {
        title: 'Filter', unit: ['dB', 'deg'], box: [126, 77, 1334, 806],
        left: [15, 10, 5, 0, -5, -10, -15, -20, -25, -30, -35], right: [180, 144, 108, 72, 36, 0, -36, -72, -108, -144, -180],
        lines: [['#dc3cdc', 2, 319]],
        curves: [
          ['#48a048', 1.500, '797,884 850,800 880,755 920,680 960,600 1000,535 1040,483 1100,425 1150,385 1200,358 1250,337 1310,322 1350,316 1400,313 1460,313'],
          ['#3cc0bc', 1.600, '126,855 190,795 260,722 340,608 400,524 420,490 434,458 450,425 480,372 495,355 510,341 530,341 545,346 565,364 600,384 625,400 650,411 700,413 760,413 860,411 905,408 970,396 1010,380 1035,377 1060,380 1080,396 1105,428 1135,480 1190,575 1240,650 1290,712 1325,755 1390,820 1452,883'],
          ['#1c1ca0', 1.800, '126,420 250,421 290,420 340,425 440,423 510,419 570,413 610,405 665,401 680,404 710,413 745,427 780,430 830,439 880,452 910,457 940,460 980,480 1015,517 1040,548 1080,610 1140,712 1190,795 1244,884'],
        ],
      },
      {
        title: 'Directivity (hor)', unit: ['dB', ''], box: [120, 212, 1332, 806],
        left: [95, 90, 85, 80, 75, 70, 65, 60, 55], right: [],
        lines: [],
        curves: [['#f01010', 2.600, total]],
      },
      {
        title: 'Impedance', unit: ['ohm', 'deg'], box: [126, 91, 1334, 810],
        left: [25, 20, 15, 10, 5, 0], right: [120, 72, 24, -24, -72, -120],
        lines: [],
        curves: [
          ['#a8a8a8', 1.400, '126,508 185,522 220,540 250,558 275,584 295,572 325,572 338,563 360,605 385,630 402,648 420,654 445,645 470,620 495,565 520,500 555,440 582,440 612,468 640,508 662,530 690,508 728,472 760,470 782,473 820,467 855,469 895,477 935,502 985,518 1015,515 1045,495 1080,450 1105,433 1125,445 1160,500 1190,540 1225,553 1270,547 1325,525 1390,500 1430,484 1460,477'],
          ['#686868', 2.300, '126,492 170,491 205,479 250,483 262,495 278,540 288,562 302,555 318,560 332,566 342,530 350,520 368,550 388,585 412,645 440,705 465,750 485,773 505,783 525,775 545,755 565,720 592,670 620,638 645,645 665,685 685,708 705,715 722,710 740,695 775,681 795,681 840,662 880,645 917,628 940,637 970,650 1000,675 1030,697 1058,705 1080,692 1105,645 1130,580 1152,555 1178,570 1215,625 1250,668 1295,695 1340,707 1385,711 1430,708 1460,703'],
        ],
      },
    ];

    const ticks = [[20, '20Hz'], [50, '50'], [100, '100'], [200, '200'], [500, '500'], [1000, '1k'], [2000, '2k'], [5000, '5k'], [10000, '10k'], [20000, '20k']];

    function grid(x, y, w, h, divs) {
      let minor = '', major = `M${x} ${y}h${w}v${h}h${-w}z`;
      for (let i = 0; i <= divs * 5; i++) {
        const line = `M${x} ${y + h * i / (divs * 5)}h${w}`;
        i % 5 ? minor += line : major += line;
      }
      for (let dec = 10; dec < 20000; dec *= 10) {
        for (let n = 1; n < 10; n++) {
          const f = dec * n;
          if (f <= 20 || f >= 20000) continue;
          const line = `M${x + w * Math.log10(f / 20) / 3} ${y}v${h}`;
          n === 1 ? major += line : minor += line;
        }
      }
      return `<path d="${minor}" stroke="#dcdcdc" stroke-width="1.200" vector-effect="non-scaling-stroke"/><path d="${major}" stroke="#808080" stroke-width="1.200" vector-effect="non-scaling-stroke"/>`;
    }

    document.getElementById('charts').innerHTML = charts.map(c => {
      const [x, y, w, h] = c.box;
      return `
      <figure class="relative bg-white h-[307px] flex flex-col text-sm">
        <figcaption class="h-[21px] grid grid-cols-3 pl-[43px] pr-[43px] leading-[20px]">
          <span>${c.unit[0]}</span><span class="text-center text-[15px] leading-6">${c.title.replace('&', '&amp;')}</span><span class="text-right">${c.unit[1]}</span>
        </figcaption>
        <div class="flex h-[269px]">
          <div class="w-[41px] pr-1 flex flex-col justify-between text-right">
            ${c.left.map(v => `<span class="h-0 flex items-center justify-end">${v}</span>`).join('')}
          </div>
          <svg class="flex-1 min-w-0 h-full" viewBox="${c.box.join(' ')}" preserveAspectRatio="none" fill="none">
            ${grid(x, y, w, h, c.left.length - 1)}
            ${c.lines.map(([color, sw, ly]) => `<path d="M${x} ${ly}h${w}" stroke="${color}" stroke-width="${sw}" vector-effect="non-scaling-stroke"/>`).join('')}
            ${c.curves.map(([color, sw, pts]) => `<path d="${curve(pts)}" stroke="${color}" stroke-width="${sw}" stroke-linejoin="round" vector-effect="non-scaling-stroke"/>`).join('')}
          </svg>
          <div class="w-10 flex flex-col justify-between">
            ${c.right.map(v => `<span class="h-0 flex items-center justify-center">${v}</span>`).join('')}
          </div>
        </div>
        <div class="flex ml-[41px] mr-10 leading-5">
          ${ticks.map(([f, label], i) => {
            const next = ticks[i + 1];
            const grow = next ? Math.log10(next[0] / f) : 0;
            return `<div class="w-0" style="flex-grow:${grow}"><div class="w-0 flex justify-center"><span class="${i ? '' : 'pl-4'}">${label}</span></div></div>`;
          }).join('')}
        </div>
        ${c.tip ? `<div class="absolute right-[6px] top-[196px] pl-1 bg-white text-[13px] leading-[18px]">${c.tip}</div>` : ''}
      </figure>`;
    }).join('');

    // Taskbar apps: name, state, icon
    const apps = [
      ['Opera', 'open', '<ellipse cx="16" cy="16" rx="11" ry="12" fill="none" stroke="#f0222f" stroke-width="6"/>'],
      ['Firefox', '', '<circle cx="16" cy="17" r="13" fill="#ff8a1c"/><path d="M16 4c8-4 13 5 13 13a13 13 0 01-8 12c4-8 0-16-5-25z" fill="#ffcf2e"/><path d="M4 12C2 20 6 28 14 30c-6-4-8-10-6-14z" fill="#ff3158"/><circle cx="16" cy="18" r="6.500" fill="#7a3fe0"/>'],
      ['Explorer', 'open', '<path d="M2 4h10l3 3h14v20H2z" fill="#e8a920"/><path d="M2 10h28v17H2z" fill="#fbd667"/><path d="M6 28V17h20v11h-6v-5h-8v5z" fill="#3d9be0"/>'],
      ['Mail', '', '<path d="M2 12L16 2l14 10-14 8z" fill="#0a5ea8"/><path d="M6 10h20v10H6z" fill="#fff"/><path d="M2 12l14 9 14-9v17H2z" fill="#27a2ec"/><path d="M2 29l14-11 14 11z" fill="#5cc3f7"/>'],
      ['Office', '', '<path d="M6 8L19 2l8 3v22l-8 3-13-5 13 2V7L11 9v13l-5 3z" fill="#d83b01"/><path d="M19 2l8 3v22l-8 3z" fill="#a8200a"/>'],
      ['Chrome', 'open', '<circle cx="15" cy="15" r="14" fill="#fbc116"/><path d="M15 15L3 8a14 14 0 0125 2z" fill="#e8402f"/><path d="M15 15L3 8a14 14 0 0010 21z" fill="#2da94f"/><circle cx="15" cy="15" r="6.500" fill="#4a8af4" stroke="#fff" stroke-width="2"/><circle cx="25" cy="25" r="6" fill="#12a4a0"/>'],
      ['Remote', 'open', '<path d="M5 3l22-1v16l-20 2z" fill="#d6dce4"/><path d="M8 5l16-1v11L9 17z" fill="#1f49c8"/><path d="M3 21l20-2 5 4-20 4z" fill="#c0c6cf"/><circle cx="24" cy="26" r="5" fill="#98a0ac"/>'],
      ['Telegram', 'alert', '<circle cx="16" cy="16" r="14" fill="#2ba3df"/><path d="M7 16l17-8-3 17-6-4-3 3v-5l9-8-11 7z" fill="#fff"/>'],
      ['Calculator', 'open', '<path d="M5 2h22v28H5z" fill="#707a84"/><path d="M8 5h16v6H8z" fill="#56c5f5"/><g fill="#e6eaee"><path d="M8 14h4v4H8zM14 14h4v4h-4zM20 14h4v4h-4zM8 20h4v4H8zM14 20h4v4h-4zM8 25h4v3H8zM14 25h4v3h-4z"/></g><path d="M20 20h4v8h-4z" fill="#1e7bc0"/>'],
      ['VituixCAD', 'active', '<path d="M8 5h16l6 7-14 17L2 12z" fill="#d01414"/><path d="M9 7h14l4 5-5 1-6 14-6-14-5-1z" fill="#ffe21a"/><path d="M11 9h10l-2 3-3 9-3-9z" fill="#d01414"/><path d="M14 9h4l-2 5z" fill="#ffe21a"/>'],
      ['Settings', 'open', '<circle cx="16" cy="16" r="7.500" fill="none" stroke="#fff" stroke-width="4"/><path d="M16 4v4M16 24v4M4 16h4M24 16h4M7.500 7.500l3 3M21.500 21.500l3 3M24.500 7.500l-3 3M10.500 21.500l-3 3" stroke="#fff" stroke-width="4"/>'],
      ['Photos', 'open', '<path d="M2 3h28v26H2z" fill="#2f9cea"/><path d="M2 29L13 12l17 17z" fill="#14406e"/><path d="M16 17l5-4 9 9v7z" fill="#1c5b98"/><circle cx="22" cy="9" r="2.500" fill="#fff"/>'],
      ['REW', 'open', '<path d="M1 1h30v30H1z" fill="#3c1a80"/><path d="M1 31V22l5-4 3 5 4-6 5 8 5-3 4 3 4-4v10z" fill="#1f8f5c"/><path d="M3 31l4-8 5 8z" fill="#e8d03a"/><text x="2" y="12" font-size="12" font-weight="bold" fill="#fff">REW</text>'],
      ['Acrobat', 'open', '<rect x="2" y="2" width="28" height="28" rx="4" fill="#b30b00"/><path d="M8 24c2-4 8-8 9-14 0-4-3-4-2 0 1 5 5 9 9 9 3 0 1-3-4-2-4 1-8 3-12 7z" fill="none" stroke="#fff" stroke-width="1.800"/>'],
    ];
    const tile = { open: '', alert: 'bg-[#b0652e]', active: 'bg-[#555455]', '': '' };
    const bar = { open: 'w-[50px] bg-[#76b9ed]', alert: 'w-[61px] bg-[#ff7300]', active: 'w-[61px] bg-[#76b9ed]', '': 'w-0' };
    document.getElementById('tasks').innerHTML = apps.map(([name, state, body]) => `
      <button aria-label="${name}" class="w-[62px] h-[50px] flex flex-col items-center justify-between pt-[9px] ${tile[state]}">
        <svg width="30" height="30" viewBox="0 0 32 32">${body}</svg>
        <span class="h-[3px] ${bar[state]}"></span>
      </button>`).join('');
  </script>
</body>
</html>
